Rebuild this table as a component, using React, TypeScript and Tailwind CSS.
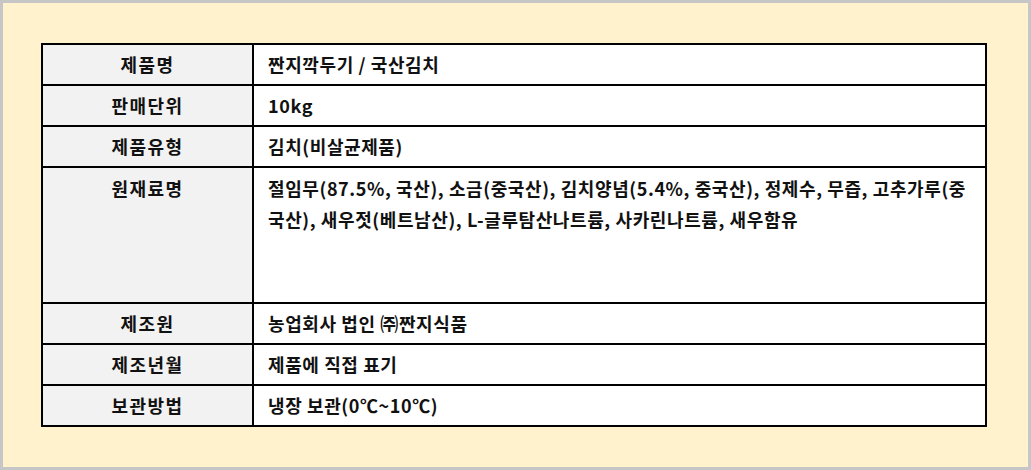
const rows: { label: string; value: string; tall?: boolean }[] = [
  { label: '제품명', value: '짠지깍두기 / 국산김치' },
  { label: '판매단위', value: '10kg' },
  { label: '제품유형', value: '김치(비살균제품)' },
  {
    label: '원재료명',
    value:
      '절임무(87.5%, 국산), 소금(중국산), 김치양념(5.4%, 중국산), 정제수, 무즙, 고추가루(중국산), 새우젓(베트남산), L-글루탐산나트륨, 사카린나트륨, 새우함유',
    tall: true,
  },
  { label: '제조원', value: '농업회사 법인 ㈜짠지식품' },
  { label: '제조년월', value: '제품에 직접 표기' },
  { label: '보관방법', value: '냉장 보관(0℃~10℃)' },
]

export default function App() {
  return (
    <div
      className="w-[1031px] h-[470px] border-[3px] border-[#c6c6c6] bg-[#fff2cc] pt-[40px] pl-[38px] pr-[39px]"
      style={{ fontFamily: '"Noto Sans CJK KR", "Noto Sans", sans-serif' }}
    >
      <table className="w-[946px] border-collapse border-2 border-black text-[18px] font-bold tracking-[0.6px] text-[#111]">
        <tbody>
          {rows.map(r => (
            <tr key={r.label} className={r.tall ? 'h-[136px]' : 'h-[41px]'}>
              <td
                className={`w-[211px] border-2 border-black bg-[#f2f2f2] text-center leading-[31px] tracking-[1.5px] ${
                  r.tall ? 'align-top pt-[5px]' : 'align-middle'
                }`}
              >
                {r.label}
              </td>
              <td
                className={`border-2 border-black bg-white pl-[14px] pr-[6px] leading-[31px] ${
                  r.tall ? 'align-top pt-[5px]' : 'align-middle'
                }`}
              >
                {r.value}
              </td>
            </tr>
          ))}
        </tbody>
      </table>
    </div>
  )
}
